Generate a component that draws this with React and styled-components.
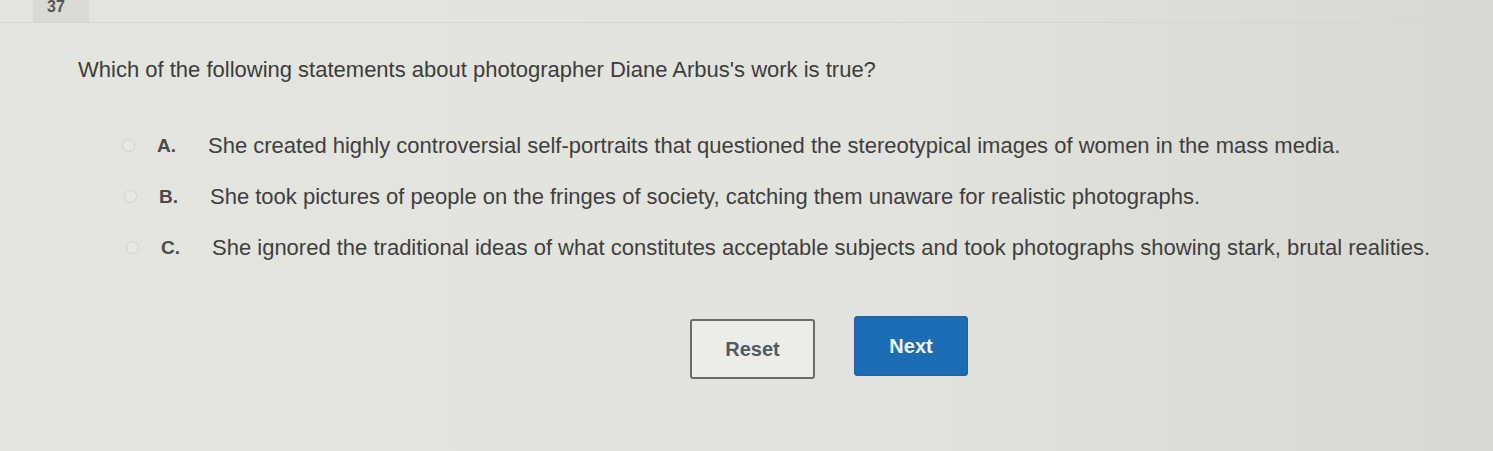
import styled, { createGlobalStyle } from "styled-components";

const GlobalStyle = createGlobalStyle`
  html, body {
    margin: 0;
    padding: 0;
  }
  body {
    width: 1493px;
    height: 451px;
    overflow: hidden;
    background: linear-gradient(90deg, #e5e5df 0%, #e3e3dd 60%, #d8d8d4 100%);
    font-family: "Liberation Sans", Arial, sans-serif;
    color: #3b3b3b;
  }
`;

const Page = styled.div`
  height: 451px;
  display: flex;
  flex-direction: column;
`;

const TopBar = styled.div`
  height: 22px;
  border-bottom: 1px solid #d6d6d0;
  padding-left: 33px;
  display: flex;
`;

const NumberTab = styled.div`
  width: 56px;
  background: #dadad5;
  font-size: 16px;
  font-weight: bold;
  color: #555;
  line-height: 13px;
  padding-left: 14px;
  box-sizing: border-box;
`;

const Question = styled.p`
  margin: 34px 0 0 78px;
  font-size: 22px;
  line-height: 26px;
  color: #3c3c3c;
`;

const Options = styled.ul`
  list-style: none;
  margin: 50px 0 0 122px;
  padding: 0;
  display: flex;
  flex-direction: column;
  gap: 26px;
`;

const Option = styled.li`
  display: flex;
  align-items: center;
  height: 25px;
  padding-left: ${(p) => p.$shift}px;
  font-size: 22px;
`;

const Radio = styled.span`
  width: 11px;
  height: 11px;
  border: 1px solid #d0d0cc;
  border-radius: 50%;
  background: #e8e8e3;
  margin-right: 22px;
`;

const Letter = styled.span`
  width: 51px;
  font-size: 19px;
  font-weight: bold;
  color: #4a4a4a;
`;

const Text = styled.span`
  color: #3e3e3e;
`;

const Buttons = styled.div`
  display: flex;
  align-items: flex-start;
  gap: 39px;
  margin-top: 59px;
  padding-left: 690px;
`;

const Button = styled.button`
  height: 60px;
  width: ${(p) => p.$w}px;
  border-radius: 3px;
  font-family: "Liberation Sans", Arial, sans-serif;
  font-size: 20px;
  font-weight: bold;
  cursor: pointer;
  ${(p) =>
    p.$primary
      ? `
    background: #1b6cb3;
    color: #f4f7fa;
    border: 1px solid #1a64a6;
    margin-top: -3px;
  `
      : `
    background: #ecece8;
    color: #4f5b66;
    border: 2px solid #6a6a6a;
  `}
`;

const options = [
  { letter: "A.", shift: 0, text: "She created highly controversial self-portraits that questioned the stereotypical images of women in the mass media." },
  { letter: "B.", shift: 2, text: "She took pictures of people on the fringes of society, catching them unaware for realistic photographs." },
  { letter: "C.", shift: 4, text: "She ignored the traditional ideas of what constitutes acceptable subjects and took photographs showing stark, brutal realities." },
];

export default function App() {
  return (
    <>
      <GlobalStyle />
      <Page>
        <TopBar>
          <NumberTab>37</NumberTab>
        </TopBar>
        <Question>Which of the following statements about photographer Diane Arbus's work is true?</Question>
        <Options>
          {options.map((o) => (
            <Option key={o.letter} $shift={o.shift}>
              <Radio />
              <Letter>{o.letter}</Letter>
              <Text>{o.text}</Text>
            </Option>
          ))}
        </Options>
        <Buttons>
          <Button $w={125}>Reset</Button>
          <Button $w={114} $primary>Next</Button>
        </Buttons>
      </Page>
    </>
  );
}
